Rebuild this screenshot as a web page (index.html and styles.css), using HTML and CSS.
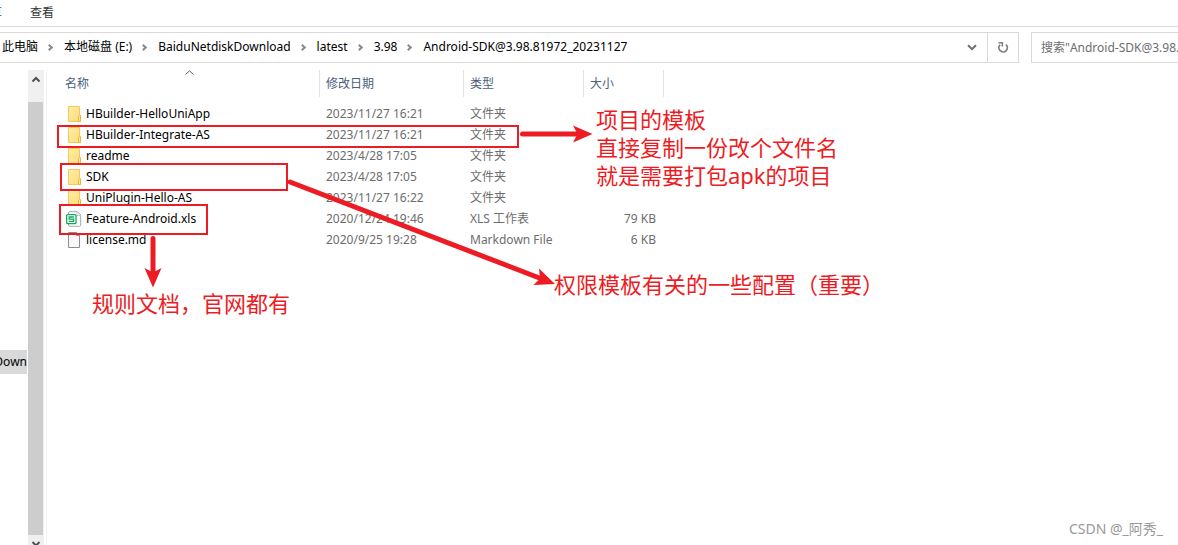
FILE: index.html
```html
<!DOCTYPE html>
<html lang="zh-CN">
<head>
<meta charset="utf-8">
<title>Android-SDK@3.98.81972_20231127</title>
<link rel="stylesheet" href="styles.css">
</head>
<body>
<div class="window">
  <nav class="tabs">
    <button class="tab tab-cut" type="button">享</button>
    <button class="tab" type="button">查看</button>
  </nav>
  <div class="toolbar">
    <div class="address">
      <ol class="crumbs">
        <li><a href="#">此电脑</a></li>
        <li><a href="#">本地磁盘 (E:)</a></li>
        <li><a href="#">BaiduNetdiskDownload</a></li>
        <li><a href="#">latest</a></li>
        <li><a href="#">3.98</a></li>
        <li><a href="#">Android-SDK@3.98.81972_20231127</a></li>
      </ol>
      <button class="drop" type="button" aria-label="以前的位置"><svg width="10" height="7" viewBox="0 0 10 7"><path d="M1 1.2 5 5.2 9 1.2" fill="none" stroke="#707070" stroke-width="2"/></svg></button>
      <button class="refresh" type="button" aria-label="刷新"><svg width="12" height="13" viewBox="0 0 12 13"><path d="M9 3.6A4.2 4.2 0 1 1 3 3.8" fill="none" stroke="#808080" stroke-width="1.8"/><path d="M1.500 1.700H5.300V5.500" fill="none" stroke="#808080" stroke-width="1.600"/></svg></button>
    </div>
    <input class="search" type="text" aria-label="搜索" placeholder='搜索"Android-SDK@3.98.81972_20231127"'>
  </div>
  <main class="content">
    <aside class="tree"><a class="tree-item" href="#">Down</a></aside>
    <div class="scrollbar">
      <button class="scroll-up" type="button" aria-label="向上滚动"><svg width="10" height="7" viewBox="0 0 10 7"><path d="M1.500 5.500 5 2 8.500 5.500" fill="none" stroke="#505050" stroke-width="2"/></svg></button>
      <div class="thumb"></div>
      <button class="scroll-down" type="button" aria-label="向下滚动"><svg width="10" height="7" viewBox="0 0 10 7"><path d="M1.500 1 5 4.500 8.500 1" fill="none" stroke="#505050" stroke-width="2"/></svg></button>
    </div>
    <section class="files">
      <table class="list">
        <colgroup><col class="c-name"><col class="c-date"><col class="c-type"><col class="c-size"></colgroup>
        <thead>
          <tr>
            <th>名称<svg class="sort" width="9" height="5" viewBox="0 0 9 5"><path d="M.5 4.500 4.500 .8 8.500 4.500" fill="none" stroke="#606060"/></svg></th>
            <th>修改日期</th><th>类型</th><th>大小</th>
          </tr>
        </thead>
        <tbody>
          <tr><td><span class="file"><svg class="icon"><use href="#folder"/></svg>HBuilder-HelloUniApp</span></td><td>2023/11/27 16:21</td><td>文件夹</td><td></td></tr>
          <tr><td><span class="file"><svg class="icon"><use href="#folder"/></svg>HBuilder-Integrate-AS</span></td><td>2023/11/27 16:21</td><td>文件夹</td><td></td></tr>
          <tr><td><span class="file"><svg class="icon"><use href="#folder"/></svg>readme</span></td><td>2023/4/28 17:05</td><td>文件夹</td><td></td></tr>
          <tr><td><span class="file"><svg class="icon"><use href="#folder"/></svg>SDK</span></td><td>2023/4/28 17:05</td><td>文件夹</td><td></td></tr>
          <tr><td><span class="file"><svg class="icon"><use href="#folder"/></svg>UniPlugin-Hello-AS</span></td><td>2023/11/27 16:22</td><td>文件夹</td><td></td></tr>
          <tr><td><span class="file"><svg class="icon"><use href="#sheet"/></svg>Feature-Android.xls</span></td><td>2020/12/24 19:46</td><td>XLS 工作表</td><td>79 KB</td></tr>
          <tr><td><span class="file"><svg class="icon"><use href="#doc"/></svg>license.md</span></td><td>2020/9/25 19:28</td><td>Markdown File</td><td>6 KB</td></tr>
        </tbody>
      </table>
    </section>
  </main>

  <svg class="marks" width="620" height="300" viewBox="0 0 620 300" aria-hidden="true">
    <g fill="none" stroke="#ed1c24" stroke-width="2">
      <rect x="58" y="126" width="460" height="21"/>
      <rect x="61" y="164" width="226" height="26"/>
      <rect x="60" y="205" width="147" height="29"/>
    </g>
    <g fill="none" stroke="#ed1c24" stroke-width="5" stroke-linecap="round">
      <path d="M522.5 134H578"/>
      <path d="M290 182 542 279"/>
      <path d="M153 238.500V272"/>
    </g>
    <g fill="#ed1c24">
      <path d="M592.500 134 573 125.500 577.500 134 573 142.500Z"/>
      <path d="M555 284 539 268.500 540 278.500 533.500 285Z"/>
      <path d="M153 287.500 144.500 268 153 272.500 161.500 268Z"/>
    </g>
  </svg>
  <p class="note note-project">项目的模板<br>直接复制一份改个文件名<br>就是需要打包apk的项目</p>
  <p class="note note-config">权限模板有关的一些配置（重要）</p>
  <p class="note note-docs">规则文档，官网都有</p>
  <p class="watermark">CSDN @_阿秀_</p>
</div>

<svg class="defs" aria-hidden="true">
  <defs>
    <linearGradient id="fold" x2="1" y2="1"><stop offset="0" stop-color="#ffeda6"/><stop offset="1" stop-color="#fddc7c"/></linearGradient>
    <symbol id="folder" viewBox="0 0 16 16"><path d="M2.500 .5H13.500V15.500H2.500Z" fill="url(#fold)" stroke="#f0cb58"/><path d="M12.500 15.500V10.500L13.500 9.500H14.500V15.500Z" fill="#ffe48f" stroke="#e5b93c"/></symbol>
    <symbol id="sheet" viewBox="0 0 16 16"><path d="M2.500 4V2Q2.500 .7 4 .7H11.500L14.700 4V14Q14.700 15.300 13.300 15.300H4Q2.500 15.300 2.500 14V12.500" fill="#fff" stroke="#a0a8b8"/><path d="M11 1V4.500H14.500" fill="none" stroke="#c0c6d0"/><rect x=".7" y="3.700" width="9.300" height="9" rx="1" fill="#fff" stroke="#12a85a" stroke-width="1.300"/><path d="M7.800 6H3.200V8.100H7.600V10.400H2.800" fill="none" stroke="#12a85a" stroke-width="1.300"/></symbol>
    <symbol id="doc" viewBox="0 0 16 16"><path d="M2.500 .5H10.500L13.500 3.500V15.500H2.500Z" fill="#f7f8f9" stroke="#8c8c8c"/><path d="M10.500 .5V3.500H13.500" fill="#fff" stroke="#8c8c8c"/></symbol>
  </defs>
</svg>
</body>
</html>
```
FILE: styles.css
```css
*, *::before { box-sizing: border-box; }
body {
  margin: 0;
  overflow: hidden;
  background: #fff;
  color: #000;
  font: 12px/20px "Noto Sans", "Noto Sans CJK SC", sans-serif;
}
button { padding: 0; border: 0; background: none; font: inherit; color: inherit; }
a { color: inherit; text-decoration: none; }
svg { display: block; }
.defs { position: absolute; width: 0; height: 0; }

.window { position: relative; display: flex; flex-direction: column; height: 100vh; overflow: hidden; }

.tabs { display: flex; align-items: center; gap: 28px; height: 27px; border-bottom: 1px solid #d9d9d9; color: #333; }
.tab-cut { width: 2px; overflow: hidden; direction: rtl; color: #2b579a; }

.toolbar { display: flex; gap: 12px; margin-top: 5px; height: 31px; }
.address { flex: 1; display: flex; border: 1px solid #d9d9d9; border-left: 0; }
.crumbs { flex: 1; display: flex; align-items: center; margin: 0; padding: 0 0 2px 2px; list-style: none; white-space: nowrap; }
.crumbs li { display: flex; align-items: center; }
.crumbs li + li::before {
  content: "";
  width: 5px;
  height: 5px;
  margin: 2px 12px 0 9px;
  border: solid #8a8a8a;
  border-width: 2px 2px 0 0;
  transform: rotate(45deg);
}
.drop, .refresh { display: grid; place-items: center; width: 30px; }
.refresh { width: 31px; border-left: 1px solid #d9d9d9; }
.search { width: 147px; padding: 0 0 0 9px; border: 1px solid #d9d9d9; border-right: 0; border-radius: 0; font: inherit; text-overflow: clip; }
.search::placeholder { color: #6d6d6d; opacity: 1; }

.content { flex: 1; display: flex; min-height: 0; padding-top: 7px; }
.tree { width: 28px; padding: 280px 1px 0 0; }
.tree-item { display: flex; justify-content: flex-end; height: 24px; line-height: 24px; overflow: hidden; background: #d9d9d9; }
.scrollbar { display: flex; flex-direction: column; width: 16px; background: #f0f0f0; overflow: hidden; }
.scroll-up { display: grid; justify-items: center; height: 32px; padding-top: 6px; align-content: start; }
.thumb { flex: 1; margin-right: 1px; background: #cdcdcd; }
.scroll-down { display: grid; justify-items: center; align-content: start; height: 10px; padding-top: 6px; }
.files { flex: 1; margin-left: 2px; border-left: 1px solid #f0f0f0; }

.list { width: 617px; table-layout: fixed; border-collapse: separate; border-spacing: 0; }
.c-name { width: 273px; }
.c-date { width: 144px; }
.c-type { width: 120px; }
.c-size { width: 80px; }
.list th { position: relative; height: 27px; padding: 0 6px; border-right: 1px solid #e2e2e2; color: #4c607a; font-weight: 400; text-align: left; }
.list th:first-child { padding-left: 18px; }
.list tbody::before { content: ""; display: block; height: 6px; }
.list td { height: 21px; padding: 0 6px; color: #6d6d6d; white-space: nowrap; }
.list td:first-child { padding-left: 19px; color: #000; }
.list td:last-child { padding-right: 8px; text-align: right; }
.sort { position: absolute; top: 0; left: 138px; }
.file { display: flex; align-items: center; gap: 4px; }
.icon { width: 16px; height: 16px; }

.marks { position: absolute; top: 0; left: 0; }
.note { position: absolute; margin: 0; color: #ed1c24; font-size: 22px; line-height: 28px; white-space: nowrap; }
.note-project { top: 105px; left: 596px; }
.note-config { top: 270px; left: 554px; }
.note-docs { top: 289px; left: 92px; }
.watermark { position: absolute; right: 15px; bottom: 6px; margin: 0; color: #999; font-size: 14px; }
```
